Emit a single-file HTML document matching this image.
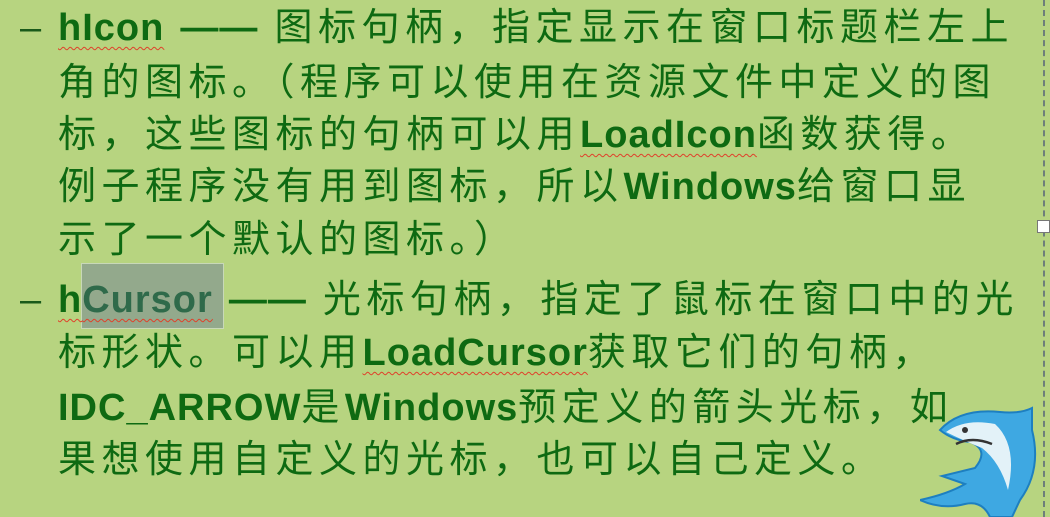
<!DOCTYPE html>
<html><head><meta charset="utf-8"><style>
html,body{margin:0;padding:0}
body{width:1050px;height:517px;overflow:hidden;background:#b7d480;position:relative;
font-family:"Liberation Sans","Noto Sans CJK SC",sans-serif;color:#0e6a12}
.l{position:absolute;left:58px;font-size:38px;letter-spacing:5.5px;white-space:nowrap;line-height:52px;height:52px}
.d{position:absolute;left:20px;font-size:38px;line-height:52px;color:#1a5a1a}
b{font-weight:bold;letter-spacing:1px}
.w{text-decoration:underline wavy #e0402a 1px;text-underline-offset:6px}
.hl{position:absolute;left:81px;top:263px;width:141px;height:64px;background:#93a98c;border:1px solid #c8d8b8}
.dash{position:absolute;left:1043px;top:0;height:517px;border-left:2px dashed #6e7f7a}
.h{position:absolute;left:1037px;top:220px;width:11px;height:11px;background:#fff;border:1px solid #777}
</style></head><body>
<div class="dash"></div><div class="h"></div>
<div class="hl"></div>
<div class="d" style="top:2px">–</div>
<div class="l" style="top:2px"><b class="w">hIcon</b> <b>——</b> 图标句柄，指定显示在窗口标题栏左上</div>
<div class="l" style="top:57px">角的图标。（程序可以使用在资源文件中定义的图</div>
<div class="l" style="top:109px">标，这些图标的句柄可以用<b class="w">LoadIcon</b>函数获得。</div>
<div class="l" style="top:161px">例子程序没有用到图标，所以<b>Windows</b>给窗口显</div>
<div class="l" style="top:214px">示了一个默认的图标。）</div>
<div class="d" style="top:274px">–</div>
<div class="l" style="top:274px"><b class="w">h<span style="color:#2f6a4a">Cursor</span></b> <b>——</b> 光标句柄，指定了鼠标在窗口中的光</div>
<div class="l" style="top:327px">标形状。可以用<b class="w">LoadCursor</b>获取它们的句柄，</div>
<div class="l" style="top:382px"><b>IDC_ARROW</b>是<b>Windows</b>预定义的箭头光标，如</div>
<div class="l" style="top:434px">果想使用自定义的光标，也可以自己定义。</div>
<svg style="position:absolute;left:920px;top:400px" width="125" height="117" viewBox="0 0 125 117">
<path d="M20 30 Q40 8 80 12 Q100 14 112 8 L112 30 Q122 70 100 100 L92 117 L70 117 Q62 100 45 104 Q22 110 0 100 Q28 94 45 84 L22 76 L55 68 Q70 50 50 42 Q32 40 20 30Z" fill="#3ea8e2" stroke="#1d7fc0" stroke-width="2"/>
<path d="M26 32 Q45 18 75 24 Q98 45 88 90 Q80 62 62 48 Q42 40 26 32Z" fill="#e3f2f8"/>
<path d="M36 44 Q52 36 72 44" stroke="#333" stroke-width="2.5" fill="none"/>
<circle cx="45" cy="30" r="3" fill="#333"/>
</svg>
</body></html>
